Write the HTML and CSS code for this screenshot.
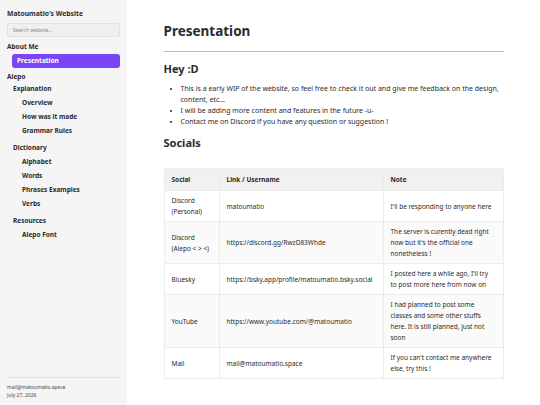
FILE: index.html
```html
<!DOCTYPE html>
<html lang="en">
<head>
<meta charset="UTF-8">
<meta name="viewport" content="width=device-width, initial-scale=1.0">
<title>Presentation - Matoumatio's Website</title>
<link rel="stylesheet" href="styles.css">
</head>
<body>
<div class="layout">
  <nav class="sidebar">
    <div class="site-title">Matoumatio's Website</div>
    <input class="search" type="text" placeholder="Search website...">
    <div class="nav-head">About Me</div>
    <a class="nav-link lvl1 active" href="#">Presentation</a>
    <div class="nav-head">Alepo</div>
    <div class="nav-head lvl1">Explanation</div>
    <a class="nav-link lvl2" href="#">Overview</a>
    <a class="nav-link lvl2" href="#">How was it made</a>
    <a class="nav-link lvl2" href="#">Grammar Rules</a>
    <div class="nav-head lvl1">Dictionary</div>
    <a class="nav-link lvl2" href="#">Alphabet</a>
    <a class="nav-link lvl2" href="#">Words</a>
    <a class="nav-link lvl2" href="#">Phrases Examples</a>
    <a class="nav-link lvl2" href="#">Verbs</a>
    <div class="nav-head lvl1">Resources</div>
    <a class="nav-link lvl2" href="#">Alepo Font</a>
    <div class="side-foot">
      <div>mail@matoumatio.space</div>
      <div>July 27, 2026</div>
    </div>
  </nav>
  <main class="main">
    <div class="content">
      <h1>Presentation</h1>
      <hr>
      <h2>Hey :D</h2>
      <ul>
        <li>This is a early WIP of the website, so feel free to check it out and give me feedback on the design, content, etc...</li>
        <li>I will be adding more content and features in the future -u-</li>
        <li>Contact me on Discord if you have any question or suggestion !</li>
      </ul>
      <h2>Socials</h2>
      <table>
        <thead>
          <tr><th class="c1">Social</th><th class="c2">Link / Username</th><th class="c3">Note</th></tr>
        </thead>
        <tbody>
          <tr><td>Discord (Personal)</td><td>matoumatio</td><td>I'll be responding to anyone here</td></tr>
          <tr><td>Discord (Alepo&nbsp;&lt;&nbsp;&gt;&nbsp;&lt;)</td><td>https://discord.gg/RwzD83Whde</td><td>The server is curently dead right now but it's the official one nonetheless !</td></tr>
          <tr><td>Bluesky</td><td>https://bsky.app/profile/matoumatio.bsky.social</td><td>I posted here a while ago, I'll try to post more here from now on</td></tr>
          <tr><td>YouTube</td><td>https://www.youtube.com/@matoumatio</td><td>I had planned to post some classes and some other stuffs here. It is still planned, just not soon</td></tr>
          <tr><td>Mail</td><td>mail@matoumatio.space</td><td>If you can't contact me anywhere else, try this !</td></tr>
        </tbody>
      </table>
    </div>
  </main>
</div>
</body>
</html>
```

FILE: styles.css
```css
body {
  margin: 0;
  padding: 0;
  font-family: "Noto Sans", sans-serif;
  color: #2b2b2b;
  background: #fff;
}
.layout {
  display: flex;
  min-height: 405px;
}
.sidebar {
  width: 113px;
  flex-shrink: 0;
  background: #f5f5f5;
  padding: 7px 7px 0 7px;
  display: flex;
  flex-direction: column;
  font-size: 6.5px;
  font-weight: 700;
}
.site-title {
  font-size: 6.8px;
  line-height: 13px;
  margin-bottom: 3px;
}
.search {
  box-sizing: border-box;
  width: 100%;
  height: 14px;
  font-family: "Noto Sans", sans-serif;
  font-size: 5px;
  padding: 0 5px;
  background: #efefef;
  border: 1px solid #e2e2e2;
  border-radius: 2px;
  margin: 0 0 1px;
}
.search::placeholder { color: #888; }
.nav-head {
  line-height: 12px;
  margin-top: 3px;
}
.nav-head.lvl1 { padding-left: 6px; margin-top: 4px; }
.nav-head + .nav-head.lvl1 { margin-top: 0; }
.nav-link {
  display: block;
  line-height: 14px;
  color: #2b2b2b;
  text-decoration: none;
  border-radius: 3px;
  padding-left: 5px;
}
.nav-head + .nav-link { margin-top: 1px; }
.nav-link.lvl1 { margin-left: 5px; }
.nav-link.lvl2 { margin-left: 10px; }
.nav-link.active {
  background: #7846f5;
  color: #fff;
}
.side-foot {
  margin-top: auto;
  border-top: 1px solid #e3e3e3;
  padding: 5px 0 6px;
  font-weight: 400;
  font-size: 5px;
  line-height: 8px;
  color: #444;
}
.main {
  flex: 1;
}
.content {
  width: 340px;
  margin: 0 auto;
  padding-top: 21px;
  font-size: 7px;
  line-height: 11px;
}
h1 {
  font-size: 13.5px;
  line-height: 20px;
  margin: 0 0 10px;
}
hr {
  border: 0;
  border-top: 1px solid #bbb;
  margin: 0 0 9px;
}
h2 {
  font-size: 11px;
  line-height: 16px;
  margin: 0;
}
ul {
  margin: 6px 0 8px;
  padding-left: 17px;
}
table {
  width: 340px;
  table-layout: fixed;
  border-collapse: collapse;
  margin-top: 17px;
  font-size: 6.5px;
}
th, td {
  text-align: left;
  vertical-align: middle;
  padding: 4px 7px;
  border: 1px solid #ececec;
}
th { background: #f1f1f1; padding: 5px 7px; }
td:last-child { padding-right: 9px; }
tbody tr:nth-child(even) td { background: #fafafa; }
.c1 { width: 40px; }
.c2 { width: 149px; }
```
